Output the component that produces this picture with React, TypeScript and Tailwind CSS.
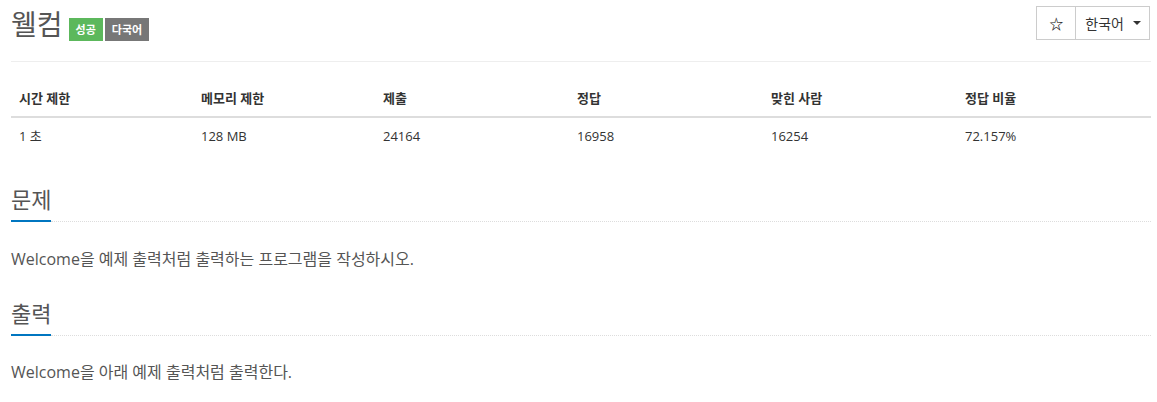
import React from 'react';

const font = { fontFamily: '"Open Sans", "Noto Sans CJK KR", sans-serif' };

const stats = [
  { label: '시간 제한', value: '1 초', w: 'w-[182px]' },
  { label: '메모리 제한', value: '128 MB', w: 'w-[182px]' },
  { label: '제출', value: '24164', w: 'w-[194px]' },
  { label: '정답', value: '16958', w: 'w-[194px]' },
  { label: '맞힌 사람', value: '16254', w: 'w-[194px]' },
  { label: '정답 비율', value: '72.157%', w: 'flex-1' },
];

function Headline({ title, className }: { title: string; className: string }) {
  return (
    <div className={`flex items-end ${className}`}>
      <h2 className="border-b-2 border-[#0076c0] pb-[6px] text-[22px] leading-[30px] text-[#555]">{title}</h2>
      <div className="mb-[0.5px] flex-1 border-b border-dotted border-[#ddd]" />
    </div>
  );
}

export default function App() {
  return (
    <div className="min-h-screen bg-white pl-[11px] pr-[6px] pt-[6px] text-[#333]" style={font}>
      <div className="flex items-start justify-between">
        <h1 className="flex items-center text-[28px] leading-[34px] text-[#555]">
          웰컴
          <span className="ml-[6px] mt-[12px] flex gap-[2px]">
            <span className="flex h-[23px] items-center bg-[#5cb85c] px-[7px] text-[11px] font-bold text-white">성공</span>
            <span className="flex h-[23px] items-center bg-[#777] px-[7px] text-[11px] font-bold text-white">다국어</span>
          </span>
        </h1>
        <div className="mr-[1px] flex h-[34px] border border-[#ccc] text-[14px]">
          <button className="flex w-[39px] items-center justify-center border-r border-[#ccc] text-[14px] font-bold text-[#222]">☆</button>
          <button className="flex items-center gap-[9px] pl-[9px] pr-[8px] text-[#333]">
            한국어
            <span className="h-0 w-0 border-x-[4px] border-t-[4px] border-x-transparent border-t-[#333]" />
          </button>
        </div>
      </div>

      <hr className="mt-[20px] border-t border-[#eee]" />

      <div className="mt-[19px] text-[13px]">
        <div className="flex border-b-2 border-[#ddd] font-bold">
          {stats.map((s) => (
            <div key={s.label} className={`${s.w} px-[8px] py-[8px] leading-[19px]`}>{s.label}</div>
          ))}
        </div>
        <div className="flex border-b border-transparent">
          {stats.map((s) => (
            <div key={s.label} className={`${s.w} px-[8px] py-[8px] leading-[20px]`}>{s.value}</div>
          ))}
        </div>
      </div>

      <Headline title="문제" className="mt-[29px]" />
      <p className="mt-[25px] text-[16px] leading-[24px] text-[#555]">Welcome을 예제 출력처럼 출력하는 프로그램을 작성하시오.</p>

      <Headline title="출력" className="mt-[27px]" />
      <p className="mt-[24px] text-[16px] leading-[24px] text-[#555]">Welcome을 아래 예제 출력처럼 출력한다.</p>
    </div>
  );
}
